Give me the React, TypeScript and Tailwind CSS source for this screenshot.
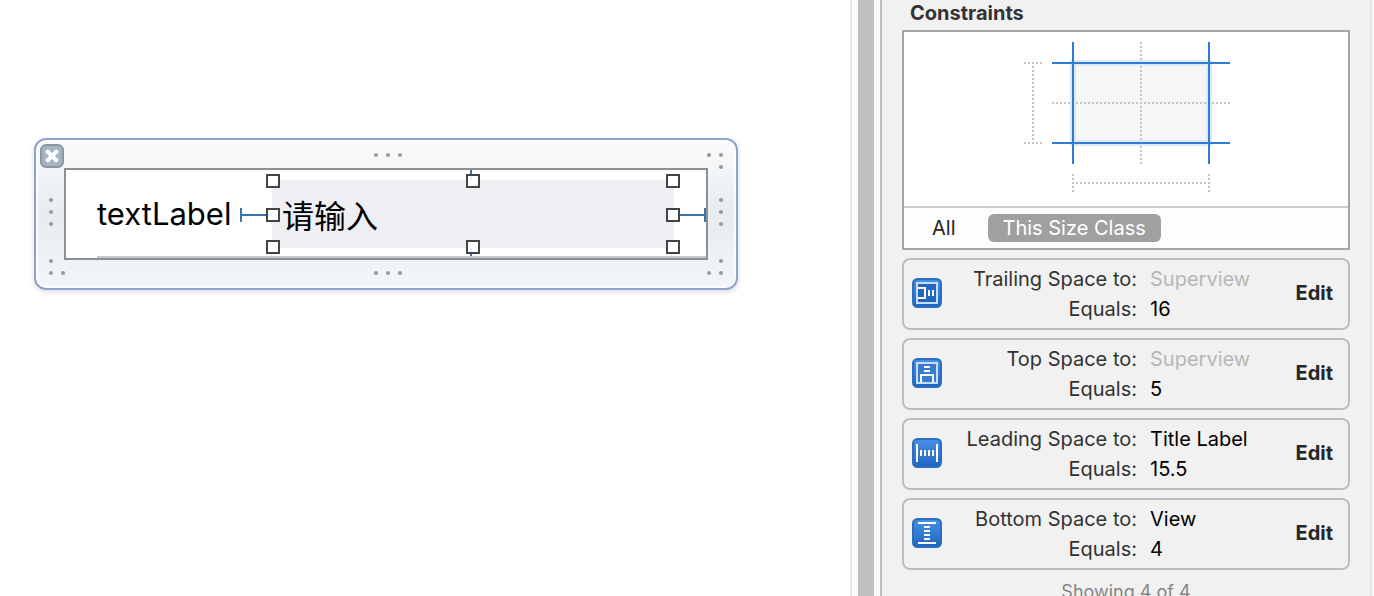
import { ReactNode } from "react";
import clsx from "clsx";

type Constraint = {
  icon: "trailing" | "top" | "leading" | "bottom";
  label: string;
  target: string;
  value: string;
  inherited?: boolean;
};

const CONSTRAINTS: Constraint[] = [
  { icon: "trailing", label: "Trailing Space to:", target: "Superview", value: "16", inherited: true },
  { icon: "top", label: "Top Space to:", target: "Superview", value: "5", inherited: true },
  { icon: "leading", label: "Leading Space to:", target: "Title Label", value: "15.5" },
  { icon: "bottom", label: "Bottom Space to:", target: "View", value: "4" },
];

const HANDLES = [
  "-left-1.5 -top-1.5",
  "left-[194px] -top-1.5",
  "-right-1.5 -top-1.5",
  "-left-1.5 top-7",
  "-right-1.5 top-7",
  "-left-1.5 -bottom-1.5",
  "left-[194px] -bottom-1.5",
  "-right-1.5 -bottom-1.5",
];

const ICON_SHAPES: Record<Constraint["icon"], ReactNode> = {
  trailing: (
    <>
      <rect x="5" y="5" width="20" height="20" fill="#2466bd" stroke="#c5defa" strokeWidth="2" />
      <path d="M6 10h7v10H6M17 12v6M21 12v6" />
    </>
  ),
  top: (
    <>
      <rect x="5" y="5" width="20" height="20" fill="#3a7bd0" stroke="#c5defa" strokeWidth="2" />
      <path d="M9 24v-7h12v7M12 9h6M12 13h6" />
    </>
  ),
  leading: <path d="M5 6v18M25 6v18M9 12v6M13 12v6M17 12v6M21 12v6" />,
  bottom: <path d="M6 5h18M6 25h18M12 9h6M12 13h6M12 17h6M12 21h6" />,
};

function ConstraintIcon({ name }: { name: Constraint["icon"] }) {
  return (
    <svg viewBox="0 0 30 30" className="mb-0.5 size-[30px] shrink-0" fill="none" aria-hidden="true">
      <defs>
        <linearGradient id={`fill-${name}`} x1="0" y1="0" x2="0" y2="1">
          <stop offset="0" stopColor="#4a90e4" />
          <stop offset="1" stopColor="#2065c2" />
        </linearGradient>
      </defs>
      <rect x="1" y="1" width="28" height="28" rx="4.5" fill={`url(#fill-${name})`} stroke="#2d6dbf" strokeWidth="2" />
      <g stroke="#fff" strokeWidth="2">
        {ICON_SHAPES[name]}
      </g>
    </svg>
  );
}

function Dots({ points }: { points: number[][] }) {
  return (
    <svg viewBox="0 0 28 28" className="size-7 overflow-visible" fill="#999c9f" aria-hidden="true">
      {points.map(([x, y]) => (
        <circle key={`${x}-${y}`} cx={x} cy={y} r="2.1" />
      ))}
    </svg>
  );
}

function CellEditor() {
  return (
    <div className="grid grid-cols-[28px_1fr_28px] grid-rows-[28px_auto_28px] items-center justify-items-center rounded-xl border-2 border-[#8fa3ca] bg-linear-to-b from-[#fafbfc] via-[#e8ecef] to-[#f3f6f8] shadow-[0_2px_5px_rgba(80,80,120,0.2),inset_0_0_2px_2px_rgba(255,255,255,0.8)]">
      <button type="button" aria-label="Close" className="pt-1 pl-1">
        <svg viewBox="0 0 24 24" className="size-6" fill="none">
          <rect x="1" y="1" width="22" height="22" rx="5" fill="#a5b3c1" stroke="#8797a6" strokeWidth="2" />
          <path d="M6.5 6.5l11 11M17.5 6.5l-11 11" stroke="#fff" strokeWidth="4" />
        </svg>
      </button>
      <Dots points={[[4, 15], [16, 15], [28, 15]]} />
      <Dots points={[[1, 15], [13, 15], [13, 27]]} />

      <Dots points={[[15, 0], [15, 12], [15, 24]]} />
      <div className="w-full border-2 border-[#8d9092] bg-white pt-2.5">
        <div className="flex items-center pb-2 pl-[31px]">
          <label htmlFor="cell-text" className="w-[143px] text-[31px] leading-10 text-black">
            textLabel
          </label>
          <svg viewBox="0 0 32 16" className="h-4 w-8" stroke="#3874a6" strokeWidth="2" aria-hidden="true">
            <path d="M1 2v14M1 9h31" />
          </svg>
          <div className="relative flex-1">
            <input
              id="cell-text"
              defaultValue="请输入"
              className="block h-[68px] w-full bg-[#efeef3] pl-2.5 text-[32px] text-black outline-none"
            />
            <span className="absolute -top-2.5 left-[198px] h-2.5 w-0.5 bg-[#3874a6]" />
            <span className="absolute -bottom-2 left-[198px] h-2 w-0.5 bg-[#3874a6]" />
            {HANDLES.map((place) => (
              <span key={place} className={clsx("absolute size-3.5 border-2 border-[#444] bg-white/90", place)} />
            ))}
          </div>
          <svg viewBox="0 0 32 16" className="h-4 w-8" stroke="#3874a6" strokeWidth="2" aria-hidden="true">
            <path d="M6 9h25M31 2v14" />
          </svg>
        </div>
        <div className="ml-[31px] h-0.5 bg-[#c8c9cb]" />
      </div>
      <Dots points={[[13, 0], [13, 12], [13, 24]]} />

      <Dots points={[[15, 1], [15, 13], [27, 13]]} />
      <Dots points={[[4, 13], [16, 13], [28, 13]]} />
      <Dots points={[[13, 1], [1, 13], [13, 13]]} />
    </div>
  );
}

function SizeDiagram() {
  return (
    <svg viewBox="0 0 208 174" className="mx-auto h-[174px] w-52" fill="none" aria-hidden="true">
      <rect x="51" y="31" width="136" height="80" fill="#f6f6f7" stroke="#dceaf6" strokeWidth="6" />
      <g stroke="#c4c4c4" strokeWidth="2" strokeDasharray="2 2">
        <path d="M119 10v122M11 34v76M2 31h18M2 111h18M54 151h132M51 142v18M187 142v18" />
        <path d="M30 71h178" />
      </g>
      <path d="M51 10v122M187 10v122M30 31h178M30 111h178" stroke="#2e7cd3" strokeWidth="2" />
    </svg>
  );
}

function ConstraintCard({ item }: { item: Constraint }) {
  return (
    <li className="flex items-center rounded-lg border-2 border-[#bdbdbd] py-1 pr-[15px] pl-2">
      <ConstraintIcon name={item.icon} />
      <dl className="grid flex-1 grid-cols-[195px_1fr] gap-x-[13px] leading-[30px]">
        <dt className="text-right text-[#333]">{item.label}</dt>
        <dd className={item.inherited ? "text-[#b7b7b7]" : "text-black"}>{item.target}</dd>
        <dt className="text-right text-[#333]">Equals:</dt>
        <dd className="text-black">{item.value}</dd>
      </dl>
      <button type="button" className="pb-0.5 font-bold text-[#262626]">
        Edit
      </button>
    </li>
  );
}

export default function App() {
  return (
    <div className="flex h-screen overflow-hidden bg-white font-['Inter','Noto_Sans_CJK_SC',sans-serif] text-xl">
      <main className="min-w-0 flex-1 pt-[138px] pr-28 pl-[34px]">
        <CellEditor />
      </main>

      <div className="w-6 shrink-0 border-r-16 border-l-2 border-r-[#c1c1c1] border-l-[#e7e7e7] bg-[#fafafa]" />
      <div className="w-2 shrink-0 border-r-2 border-[#bfbfbf] bg-[#f8f8f8]" />

      <aside className="w-[490px] shrink-0 border-r-2 border-[#e6e6e6] bg-[#f1f1f1] px-5">
        <h2 className="pb-1 pl-2 leading-[26px] font-bold text-[#333]">Constraints</h2>
        <div className="border-2 border-[#a6a6a6] bg-white">
          <SizeDiagram />
          <div className="flex items-center gap-4 border-t-2 border-[#cdcdcd] bg-[#fdfdfd] px-3 py-1.5 leading-7">
            <button type="button" className="px-4 text-[#262626]">
              All
            </button>
            <button type="button" className="rounded-md bg-[#a0a0a0] px-[15px] text-white">
              This Size Class
            </button>
          </div>
        </div>
        <ul className="flex flex-col gap-2 pt-2">
          {CONSTRAINTS.map((item) => (
            <ConstraintCard key={item.icon} item={item} />
          ))}
        </ul>
        <p className="pt-2 text-center text-lg text-[#858585]">Showing 4 of 4</p>
      </aside>
      <div className="w-0.5 shrink-0 bg-[#f8f8f8]" />
    </div>
  );
}
